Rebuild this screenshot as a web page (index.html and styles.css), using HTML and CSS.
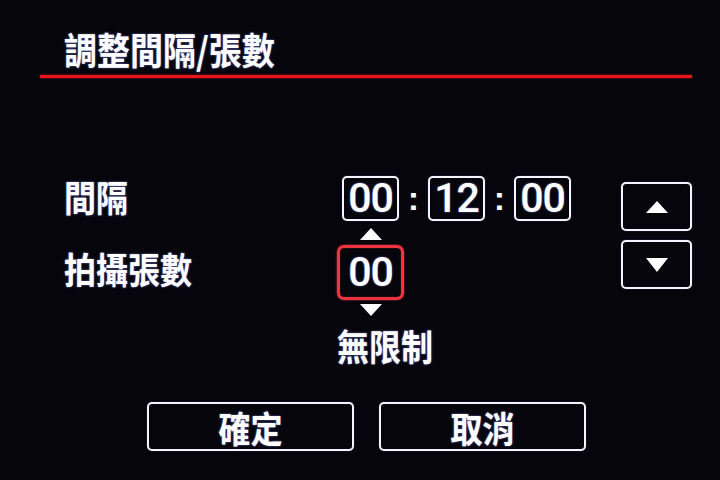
FILE: index.html
```html
<!DOCTYPE html>
<html lang="zh-Hant">
<head>
<meta charset="utf-8">
<title>調整間隔/張數</title>
<link rel="stylesheet" href="styles.css">
</head>
<body>
<div class="screen">
  <header class="header">
    <h1 class="title"><span class="cjk">調整間隔/張數</span></h1>
  </header>
  <div class="rule"></div>

  <section class="settings">
    <div class="labels">
      <div class="label label-interval"><span class="cjk">間隔</span></div>
      <div class="label label-count"><span class="cjk">拍攝張數</span></div>
    </div>

    <div class="values">
      <div class="time">
        <div class="field">00</div>
        <div class="sep">:</div>
        <div class="field">12</div>
        <div class="sep">:</div>
        <div class="field">00</div>
      </div>
      <div class="stepper">
        <svg class="tri tri-up" width="22" height="12" viewBox="0 0 22 12"><polygon points="11,0 22,12 0,12" fill="#fff"/></svg>
        <div class="field field-active">00</div>
        <svg class="tri tri-down" width="22" height="12" viewBox="0 0 22 12"><polygon points="0,0 22,0 11,12" fill="#fff"/></svg>
      </div>
      <div class="unlimited"><span class="cjk">無限制</span></div>
    </div>

    <div class="side">
      <div class="side-btn">
        <svg width="22" height="12" viewBox="0 0 22 12"><polygon points="11,0 22,12 0,12" fill="#fff"/></svg>
      </div>
      <div class="side-btn">
        <svg width="22" height="14" viewBox="0 0 22 14"><polygon points="0,0 22,0 11,14" fill="#fff"/></svg>
      </div>
    </div>
  </section>

  <footer class="actions">
    <div class="action-btn"><span class="cjk">確定</span></div>
    <div class="action-btn"><span class="cjk">取消</span></div>
  </footer>
</div>
</body>
</html>
```

FILE: styles.css
```css
html, body {
  margin: 0;
  padding: 0;
}

body {
  background: #05050b;
  width: 720px;
  height: 480px;
  overflow: hidden;
  color: #ffffff;
  font-family: "Noto Sans CJK TC", "Noto Sans", sans-serif;
}

.screen {
  display: flex;
  flex-direction: column;
  width: 720px;
  height: 480px;
}

.cjk {
  display: inline-block;
  font-family: "Noto Sans CJK TC", "Noto Sans CJK SC", sans-serif;
  font-weight: 700;
  font-size: 32px;
  line-height: 34px;
  transform: scaleY(1.13);
  color: #ffffff;
  text-shadow: 0 0 2px rgba(140, 140, 255, 0.8);
  white-space: nowrap;
}

.header {
  padding: 32px 0 0 64px;
}

.title {
  margin: 0;
  font-size: 32px;
  font-weight: 700;
  line-height: 34px;
  height: 34px;
}

.title .cjk {
  font-size: 33px;
}

.rule {
  margin: 9px 0 0 40px;
  width: 652px;
  height: 3px;
  background: #e8141c;
  box-shadow: 0 0 2px rgba(255, 40, 40, 0.8);
}

.settings {
  display: flex;
  align-items: flex-start;
  margin-top: 98px;
  padding-left: 64px;
}

.labels {
  width: 273px;
  display: flex;
  flex-direction: column;
}

.label {
  height: 34px;
}

.label-interval {
  margin-top: 3px;
}

.label-count {
  margin-top: 38px;
}

.values {
  width: 284px;
  display: flex;
  flex-direction: column;
}

.time {
  display: flex;
  align-items: center;
  padding-left: 5px;
}

.field {
  box-sizing: border-box;
  width: 57px;
  height: 45px;
  border: 2px solid #f4f4ff;
  border-radius: 5px;
  display: flex;
  align-items: center;
  justify-content: center;
  font-family: Roboto, "Liberation Sans", sans-serif;
  font-weight: 500;
  font-size: 41px;
  line-height: 41px;
  letter-spacing: -1px;
  color: #ffffff;
  text-shadow: 0 0 2px rgba(140, 140, 255, 0.8);
  box-shadow: 0 0 1px rgba(140, 140, 255, 0.8);
}

.sep {
  width: 29px;
  text-align: center;
  font-family: "Liberation Sans", Arial, sans-serif;
  font-weight: 700;
  font-size: 34px;
  line-height: 41px;
  color: #ffffff;
}

.stepper {
  width: 67px;
  display: flex;
  flex-direction: column;
  align-items: center;
  margin-top: 7px;
}

.tri {
  display: block;
}

.field-active {
  width: 67px;
  height: 55px;
  margin: 5px 0 4px;
  border: 3px solid #ee3440;
  border-radius: 7px;
  box-shadow: 0 0 2px rgba(255, 60, 70, 0.9), inset 0 0 1px rgba(255, 60, 70, 0.9);
}

.unlimited {
  margin-top: 12px;
  height: 34px;
}

.side {
  width: 71px;
  display: flex;
  flex-direction: column;
  gap: 9px;
  margin-top: 6px;
}

.side-btn {
  box-sizing: border-box;
  height: 49px;
  border: 2px solid #f4f4ff;
  border-radius: 5px;
  display: flex;
  align-items: center;
  justify-content: center;
  box-shadow: 0 0 1px rgba(140, 140, 255, 0.8);
}

.side-btn svg {
  display: block;
}

.actions {
  display: flex;
  gap: 25px;
  padding-left: 147px;
  margin-top: 40px;
}

.action-btn {
  box-sizing: border-box;
  width: 207px;
  height: 49px;
  border: 2px solid #f4f4ff;
  border-radius: 5px;
  display: flex;
  align-items: center;
  justify-content: center;
  box-shadow: 0 0 1px rgba(140, 140, 255, 0.8);
}
```
